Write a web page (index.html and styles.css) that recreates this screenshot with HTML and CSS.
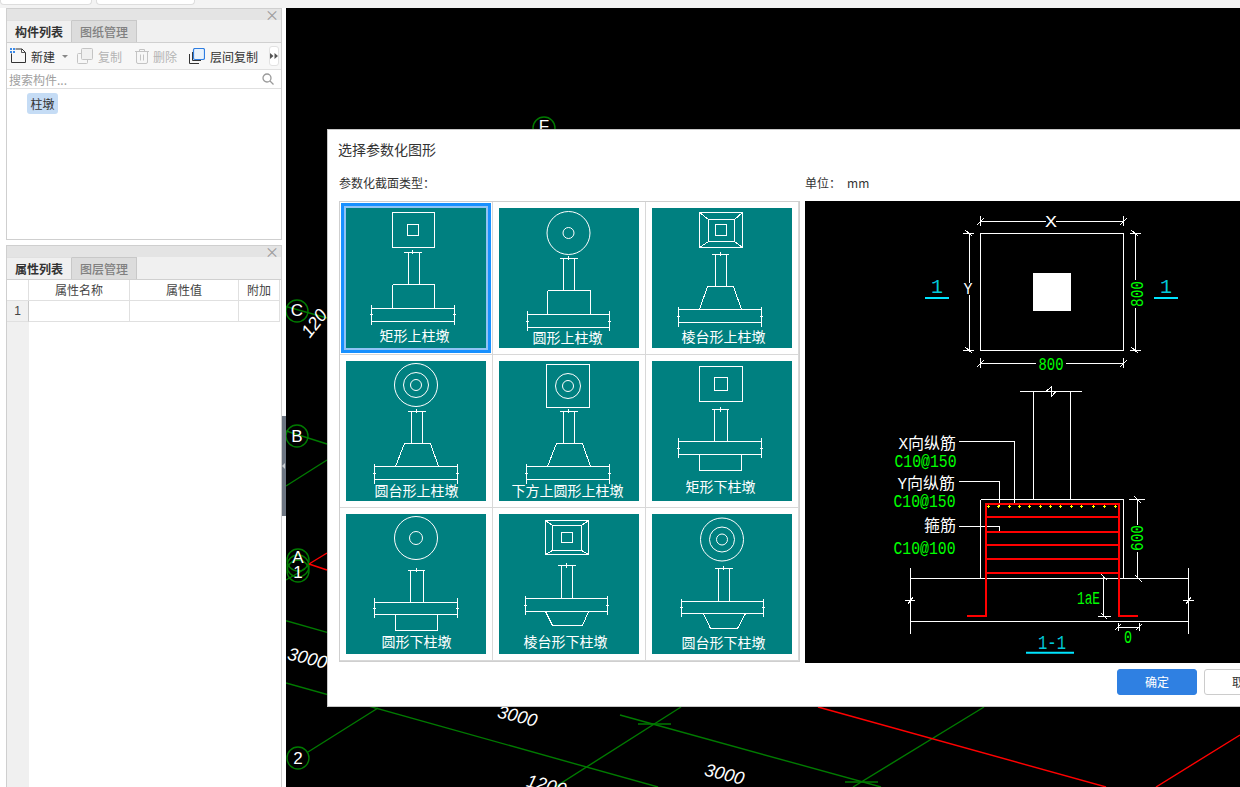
FILE: index.html
```html
<!DOCTYPE html>
<html lang="zh">
<head>
<meta charset="utf-8">
<title>选择参数化图形</title>
<link rel="stylesheet" href="styles.css">
</head>
<body>
<div class="topstrip"><span class="toptab t1"></span><span class="toptab t2"></span></div>
<div class="main">
  <aside class="sidebar">
    <section class="panel panel-top">
      <div class="panel-title"><span class="close">×</span></div>
      <div class="tabs"><span class="tab active">构件列表</span><span class="tab">图纸管理</span></div>
      <div class="toolbar">
        <span class="tool new">
          <svg class="ico" width="16" height="16" viewBox="0 0 16 16"><path class="i-dark" d="M1.5 5.5V14.5H15.5V4.5L12 1H5.500"/><path class="i-fold" d="M11.500 1V4.500H15.500"/><rect class="i-blue" x="0" y="0" width="2" height="2"/><rect class="i-blue" x="3" y="0" width="2" height="2"/><rect class="i-blue" x="0" y="3" width="2" height="2"/><rect class="i-blue" x="3" y="3" width="2" height="2"/></svg>
          <span>新建</span><i class="caret"></i>
        </span>
        <span class="tool off copy">
          <svg class="ico" width="16" height="16" viewBox="0 0 16 16"><path class="i-gray" d="M4.500 5.500H1.500a1 1 0 0 0-1 1V14.500a1 1 0 0 0 1 1H9.500a1 1 0 0 0 1-1V11.500"/><rect class="i-grayfill" x="4.500" y="0.500" width="11" height="11" rx="1"/></svg>
          <span>复制</span>
        </span>
        <span class="tool off del">
          <svg class="ico" width="14" height="16" viewBox="0 0 14 16"><path class="i-gray" d="M0 3.500H14M4.500 3.500V1.500H9.500V3.500M1.500 3.500V14a1.500 1.500 0 0 0 1.500 1.500H11A1.500 1.500 0 0 0 12.500 14V3.500M5.500 6.500V12.500M8.500 6.500V12.500"/></svg>
          <span>删除</span>
        </span>
        <span class="tool layer">
          <svg class="ico" width="16" height="16" viewBox="0 0 16 16"><path class="i-dark" d="M3.500 4V12.500H12M0.500 6V15.500H10"/><rect class="i-bluebox" x="4.500" y="0.500" width="11" height="11" rx="1.500"/></svg>
          <span>层间复制</span>
        </span>
        <span class="more"><svg width="8" height="6" viewBox="0 0 8 6"><path class="i-more" d="M0 0L3.500 3L0 6ZM4.500 0L8 3L4.500 6Z"/></svg></span>
      </div>
      <div class="search">
        <span>搜索构件...</span>
        <svg width="12" height="12" viewBox="0 0 12 12"><circle class="i-gray2" cx="5" cy="5" r="4"/><path class="i-gray2" d="M8 8L11.500 11.500"/></svg>
      </div>
      <div class="tree"><span class="pill">柱墩</span></div>
    </section>
    <section class="panel panel-bottom">
      <div class="panel-title"><span class="close">×</span></div>
      <div class="tabs"><span class="tab active">属性列表</span><span class="tab">图层管理</span></div>
      <div class="ptable">
        <div class="ph corner"></div><div class="ph">属性名称</div><div class="ph">属性值</div><div class="ph">附加</div>
        <div class="rowno">1</div><div class="pc"></div><div class="pc"></div><div class="pc"></div>
      </div>
      <div class="gutter"></div>
    </section>
    <div class="handle"><i></i></div>
  </aside>

  <div class="canvas">
    <svg class="cadbg" width="954" height="779" viewBox="286 8 954 779">
      <g class="gl">
        <path d="M286 306.500L327 318M286 431L327 444M286 486L327 460M286 580L305 569M286 620.700L327 632.300M286 683L658 787"/>
        <path d="M620 715L881 787M681 707L555 787M378 708L308 752M984 707L853 787"/>
        <path d="M638 724H671M845 782H878"/>
        <circle cx="544" cy="128" r="11"/><circle cx="297" cy="311" r="11"/><circle cx="297" cy="436" r="11"/>
        <circle cx="298" cy="560" r="11"/><circle cx="298" cy="566" r="11"/><circle cx="298" cy="571" r="11"/><circle cx="298" cy="758" r="11"/>
      </g>
      <g class="rl"><path d="M309 564L327 553M309 564L327 570M818 707L1106 787M1240 735L1156 787"/></g>
      <g class="cl">
        <text x="544" y="132">F</text><text x="297" y="316">C</text><text x="297" y="442">B</text>
        <text x="298" y="563">A</text><text x="298" y="578">1</text><text x="298" y="764">2</text>
        <text class="num" transform="translate(319 327) rotate(-52)">120</text>
        <text class="num" transform="translate(306 664) rotate(14)">3000</text>
        <text class="num" transform="translate(516 722) rotate(14)">3000</text>
        <text class="num" transform="translate(723 780) rotate(14)">3000</text>
        <text class="num" transform="translate(545 791) rotate(14)">1200</text>
      </g>
    </svg>

    <div class="dialog">
      <div class="dlg-title">选择参数化图形</div>
      <div class="dlg-labels"><span class="lbl-type">参数化截面类型：</span><span class="lbl-unit">单位：<b>mm</b></span></div>
      <div class="dlg-body">
        <div class="shapes">
          <div class="cell selected"><svg class="thumb" width="140" height="140" viewBox="0 0 140 140">
            <path d="M46.500 4.500H88.500V39.500H46.500ZM61.500 16.500H72.500V27.500H61.500ZM58 44.500H76M62.500 44.500V76.500M73.500 44.500V76.500M66.500 42V46M46.500 76.500H88.500M46.500 76.500V100.500M88.500 76.500V100.500M25.500 100.500H108.500M25.500 113.500H108.500M25.500 97V117M108.500 97V117M24 106H27M107 106H110"/>
            <text x="68.500" y="133">矩形上柱墩</text></svg></div>
          <div class="cell"><svg class="thumb" width="140" height="140" viewBox="0 0 140 140">
            <circle cx="69.500" cy="25" r="21.500"/><circle cx="69.500" cy="25" r="5.500"/>
            <path d="M60.500 50.500H79M64.500 50.500V82.500M75.500 50.500V82.500M69.500 48V52M48.500 82.500H91.500M48.500 82.500V106.500M91.500 82.500V106.500M28.500 106.500H110.500M28.500 119.500H110.500M28.500 103V123M110.500 103V123M27 113H30M109 113H112"/>
            <text x="68.500" y="135">圆形上柱墩</text></svg></div>
          <div class="cell"><svg class="thumb" width="140" height="140" viewBox="0 0 140 140">
            <path d="M47.500 4.500H90.500V39.500H47.500ZM56.500 11.500H82.500V33.500H56.500ZM63.500 16.500H74.500V27.500H63.500ZM47.500 4.500L56.500 11.500M90.500 4.500L82.500 11.500M47.500 39.500L56.500 33.500M90.500 39.500L82.500 33.500M59.500 46.500H77M63.500 46.500V78.500M74.500 46.500V78.500M68.500 44V48M55.500 78.500H81.500M55.500 78.500L47.500 101.500M81.500 78.500L89.500 101.500M26.500 101.500H109.500M26.500 114.500H109.500M26.500 99V119M109.500 99V119M25 108H28M108 108H111"/>
            <text x="71.500" y="134">棱台形上柱墩</text></svg></div>
          <div class="cell"><svg class="thumb" width="140" height="140" viewBox="0 0 140 140">
            <circle cx="70" cy="24" r="21.500"/><circle cx="70" cy="24" r="12.500"/><circle cx="70" cy="24" r="5.500"/>
            <path d="M61.500 50.500H80M65.500 50.500V82.500M76.500 50.500V82.500M70.500 48V52M58.500 82.500H84.500M58.500 82.500L49.500 105.500M84.500 82.500L92.500 105.500M28.500 105.500H111.500M28.500 118.500H111.500M28.500 103V123M111.500 103V123M27 112H30M110 112H113"/>
            <text x="70.500" y="135">圆台形上柱墩</text></svg></div>
          <div class="cell"><svg class="thumb" width="140" height="140" viewBox="0 0 140 140">
            <path d="M47.500 3.500H90.500V46.500H47.500Z"/><circle cx="69" cy="25" r="12.500"/><circle cx="69" cy="25" r="5.500"/>
            <path d="M60.500 50.500H79M64.500 50.500V82.500M75.500 50.500V82.500M69.500 48V52M57.500 82.500H83.500M57.500 82.500L48.500 105.500M83.500 82.500L91.500 105.500M27.500 105.500H110.500M27.500 118.500H110.500M27.500 103V123M110.500 103V123M26 112H29M109 112H112"/>
            <text x="68.500" y="135">下方上圆形上柱墩</text></svg></div>
          <div class="cell"><svg class="thumb" width="140" height="140" viewBox="0 0 140 140">
            <path d="M47.500 5.500H90.500V40.500H47.500ZM62.500 16.500H75.500V29.500H62.500ZM59.500 48.500H77M62.500 48.500V80.500M75.500 48.500V80.500M68.500 46V51M26.500 80.500H109.500M26.500 93.500H109.500M26.500 77V97M109.500 77V97M25 87H28M108 87H111M47.500 93.500V109.500H89.500V93.500"/>
            <text x="68.500" y="131">矩形下柱墩</text></svg></div>
          <div class="cell"><svg class="thumb" width="140" height="140" viewBox="0 0 140 140">
            <circle cx="70" cy="24" r="21.500"/><circle cx="70" cy="24" r="6.500"/>
            <path d="M61.500 56.500H79M64.500 56.500V88.500M77.500 56.500V88.500M70.500 54V58M28.500 88.500H111.500M28.500 100.500H111.500M28.500 84V104M111.500 84V104M27 94H30M110 94H113M49.500 100.500V116.500H91.500V100.500"/>
            <text x="70.500" y="133">圆形下柱墩</text></svg></div>
          <div class="cell"><svg class="thumb" width="140" height="140" viewBox="0 0 140 140">
            <path d="M46.500 6.500H89.500V40.500H46.500ZM53.500 11.500H82.500V36.500H53.500ZM62.500 18.500H73.500V28.500H62.500ZM46.500 6.500L53.500 11.500M89.500 6.500L82.500 11.500M46.500 40.500L53.500 36.500M89.500 40.500L82.500 36.500M58.500 51.500H77M62.500 51.500V84.500M73.500 51.500V84.500M67.500 49V54M26.500 84.500H108.500M26.500 97.500H108.500M26.500 82V101M108.500 82V101M25 91H28M107 91H110M46.500 97.500L53.500 111.500H83.500L89.500 97.500"/>
            <text x="66.500" y="133">棱台形下柱墩</text></svg></div>
          <div class="cell"><svg class="thumb" width="140" height="140" viewBox="0 0 140 140">
            <circle cx="70" cy="25.500" r="21.500"/><circle cx="70" cy="25.500" r="12.500"/><circle cx="70" cy="25.500" r="5.500"/>
            <path d="M62.500 54.500H81M66.500 54.500V87.500M77.500 54.500V87.500M71.500 52V56M29.500 87.500H111.500M29.500 99.500H111.500M29.500 85V103M111.500 85V103M28 93H31M110 93H113M51.500 99.500L58.500 114.500H85.500L93.500 99.500"/>
            <text x="71.500" y="134">圆台形下柱墩</text></svg></div>
        </div>
        <div class="preview">
          <svg width="435" height="462" viewBox="805 201 435 462">
            <g class="w">
              <path d="M980.500 233.500H1123.500V350.500H980.500ZM980.500 221.500H1046M1056 221.500H1123.500M980.500 216V226M1123.500 216V226M977 225L984 218M1120 225L1127 218"/>
              <path d="M969.500 233.500V283M969.500 295V350.500M963 233.500H974M963 350.500H974M965 230L972 236M965 347L972 353"/>
              <path d="M1135.500 233.500V280M1135.500 308V350.500M1130 233.500H1141M1130 350.500H1141M1131 230L1138 236M1131 347L1138 353"/>
              <path d="M980.500 363.500H1036M1066 363.500H1123.500M980.500 358V368M1123.500 358V368M977 367L984 360M1120 367L1127 360"/>
              <path d="M1020 391.500H1082M1033.500 391.500V499.500M1070.500 391.500V499.500M1046 391.500L1051 387V397L1056 391.500"/>
              <path d="M980.500 499.500H1123.500M980.500 499.500V578.500M1123.500 499.500V578.500M910.500 578.500H1188.500M910.500 621.500H1188.500M910.500 568V634M1188.500 568V634M905 600H915M1183 600H1194M908 604L913 597M1186 604L1191 597"/>
              <path d="M959 441.500H1014.500V504M959 481.500H999.500V506M959 526.500H999.500V532"/>
              <path d="M1137.500 499.500V525M1137.500 552V578.500M1129 499.500H1145M1128 578.500H1141M1134 496L1141 503M1135 575L1142 582"/>
              <path d="M1103.500 577V616M1098 616.500H1111M1101 574L1107 580M1101 613L1107 619"/>
              <path d="M1118 627.500H1139M1118 623V631M1139 623V631M1115 630L1121 624M1136 630L1142 624"/>
            </g>
            <rect class="sq" x="1033" y="273" width="38" height="38"/>
            <path class="rb" d="M967 616H986V504H1119V616H1138"/>
            <path class="rs" d="M986 517H1119M986 532H1119M986 545H1119M986 559H1119M986 573H1119"/>
            <path class="yd" d="M986.800 506.700H989.800M988.300 505.200V508.200M996.800 506.700H999.800M998.300 505.200V508.200M1007.800 506.700H1010.800M1009.300 505.200V508.200M1017.800 506.700H1020.800M1019.300 505.200V508.200M1027.800 506.700H1030.800M1029.300 505.200V508.200M1038.800 506.700H1041.800M1040.300 505.200V508.200M1048.800 506.700H1051.800M1050.300 505.200V508.200M1058.800 506.700H1061.800M1060.300 505.200V508.200M1069.800 506.700H1072.800M1071.300 505.200V508.200M1079.800 506.700H1082.800M1081.300 505.200V508.200M1091.800 506.700H1094.800M1093.300 505.200V508.200M1102.800 506.700H1105.800M1104.300 505.200V508.200M1113.800 506.700H1116.800M1115.300 505.200V508.200"/>
            <path class="cu" d="M925 298H949M1154 298H1178M1026 652.700H1074"/>
            <text class="wt" x="1051" y="226.500" textLength="12" lengthAdjust="spacingAndGlyphs">X</text>
            <text class="wt" x="968" y="294" textLength="9" lengthAdjust="spacingAndGlyphs">Y</text>
            <text class="gt" x="1051" y="370" textLength="25" lengthAdjust="spacingAndGlyphs">800</text>
            <text class="gt" transform="translate(1142.500 294) rotate(-90)" textLength="26" lengthAdjust="spacingAndGlyphs">800</text>
            <text class="gt" transform="translate(1142.500 538) rotate(-90)" textLength="26" lengthAdjust="spacingAndGlyphs">600</text>
            <text class="ct" x="937" y="293">1</text>
            <text class="ct" x="1166" y="293">1</text>
            <text class="ct" x="1052" y="648.500" textLength="28" lengthAdjust="spacingAndGlyphs">1-1</text>
            <text class="lb" x="956" y="449">X向纵筋</text>
            <text class="gl2" x="956.500" y="467" textLength="62" lengthAdjust="spacingAndGlyphs">C10@150</text>
            <text class="lb" x="955" y="489">Y向纵筋</text>
            <text class="gl2" x="955.500" y="507" textLength="62" lengthAdjust="spacingAndGlyphs">C10@150</text>
            <text class="lb" x="956" y="531">箍筋</text>
            <text class="gl2" x="955.500" y="554" textLength="62" lengthAdjust="spacingAndGlyphs">C10@100</text>
            <text class="gt" x="1088.500" y="604" textLength="23" lengthAdjust="spacingAndGlyphs">1aE</text>
            <text class="gt" x="1128" y="642.500" textLength="8" lengthAdjust="spacingAndGlyphs">0</text>
          </svg>
        </div>
      </div>
      <div class="dlg-foot"><span class="btn primary">确定</span><span class="btn">取消</span></div>
    </div>
  </div>
</div>
</body>
</html>
```
FILE: styles.css
```css
* { box-sizing: border-box; }
html, body { margin: 0; height: 787px; overflow: hidden; }
body { background: #fff; font-family: "Noto Sans CJK SC", "Noto Sans", sans-serif; font-size: 12px; color: #333; }

.topstrip { height: 8px; display: flex; gap: 4px; background: #f3f3f3; align-items: flex-start; }
.toptab { height: 5px; background: #fff; border: 1px solid #ddd; border-top: 0; border-radius: 0 0 4px 4px; }
.t1 { width: 92px; }
.t2 { width: 99px; }

.main { display: flex; height: 779px; }
.sidebar { position: relative; width: 286px; flex: none; padding: 0 4px 0 6px; display: flex; flex-direction: column; gap: 5px; background: #fff; }
.panel { border: 1px solid #cfcfcf; border-bottom: 0; background: #fff; display: flex; flex-direction: column; }
.panel-top { height: 232px; border-bottom: 1px solid #cfcfcf; }
.panel-bottom { flex: 1; min-height: 0; }
.panel-title { height: 11px; background: #e4e4e4; display: flex; justify-content: flex-end; align-items: center; padding-right: 2px; }
.close { font-size: 14px; line-height: 11px; color: #999; }
.tabs { height: 23px; display: flex; background: #f0f0f0; border-bottom: 1px solid #d0d0d0; }
.tab { width: 65px; font-weight: 500; text-align: center; line-height: 22px; color: #808080; background: #dcdcdc; border: 1px solid #c8c8c8; border-bottom: 0; border-left: 0; }
.tab.active { color: #333; background: #f0f0f0; font-weight: 700; border-top: 1px solid #e0e0e0; }

.toolbar { height: 27px; flex: none; display: flex; align-items: center; background: #f7f7f7; border-bottom: 1px solid #e0e0e0; position: relative; padding-left: 3px; }
.tool { display: flex; align-items: center; gap: 5px; white-space: nowrap; color: #333; }
.tool.off { color: #b4b4b4; }
.tool.new { width: 67px; }
.tool.copy { width: 58px; }
.tool.del { width: 54px; gap: 4px; }
.tool.layer { width: 79px; }
.ico { display: block; flex: none; }
.caret { width: 0; height: 0; margin-left: 2px; border: 3px solid transparent; border-top: 3px solid #888; border-bottom: 0; }
.more { width: 10px; height: 20px; margin-left: 1px; background: #fff; border: 1px solid #e2e2e2; border-radius: 3px; display: flex; align-items: center; justify-content: center; }
.more svg { flex: none; }
.i-dark { fill: none; stroke: #333; }
.i-fold { fill: none; stroke: #555; }
.i-blue { fill: #3d8be8; }
.i-gray { fill: none; stroke: #c4c4c4; }
.i-gray2 { fill: none; stroke: #9a9a9a; stroke-width: 1.3; }
.i-grayfill { fill: #f0f0f0; stroke: #c4c4c4; }
.i-bluebox { fill: #e8f2fc; stroke: #2e7de1; stroke-width: 1.2; }
.i-more { fill: #555; }

.search { height: 19px; flex: none; display: flex; justify-content: space-between; align-items: center; padding: 0 7px 0 2px; color: #a0a0a0; border-bottom: 1px solid #e0e0e0; }
.tree { padding: 4px 0 0 20px; }
.pill { display: inline-block; width: 31px; height: 21px; line-height: 21px; text-align: center; border-radius: 3px; background: #c5dcf5; color: #333; }

.ptable { display: grid; grid-template-columns: 22px 101px 109px 41px; grid-template-rows: 21px 21px; flex: none; background: #fff; }
.ph { border-right: 1px solid #e0e0e0; border-bottom: 1px solid #e0e0e0; text-align: center; line-height: 20px; color: #444; }
.corner { background: #fff; }
.rowno { background: #f0f0f0; border-right: 1px solid #c8c8c8; border-bottom: 1px solid #e0e0e0; text-align: center; line-height: 20px; font-family: "Liberation Sans", sans-serif; color: #444; }
.pc { border-right: 1px solid #e0e0e0; border-bottom: 1px solid #e0e0e0; }
.gutter { width: 22px; flex: 1; background: #f0f0f0; }

.handle { position: absolute; left: 282px; top: 408px; width: 4px; height: 100px; background: #6d7682; display: flex; align-items: center; }
.handle i { width: 0; height: 0; border: 3px solid transparent; border-right: 3px solid #c8ccd0; border-left: 0; }

.canvas { position: relative; flex: 1; min-width: 0; background: #000; overflow: hidden; }
.cadbg { display: block; }
.gl path, .gl circle { fill: none; stroke: #007a00; stroke-width: 1.4; }
.rl path { fill: none; stroke: #f00; stroke-width: 1.4; }
.cl text { fill: #fff; font-family: "Liberation Sans", sans-serif; font-size: 17px; text-anchor: middle; }
.cl .num { font-size: 18px; font-style: italic; }

.dialog { position: absolute; left: 41px; top: 121px; width: 1000px; height: 578px; background: #fff; border: 1px solid #c8c8c8; padding: 9px 0 0 11px; }
.dlg-title { height: 20px; line-height: 20px; font-size: 14px; color: #333; margin-left: -1px; }
.dlg-labels { display: flex; height: 18px; margin-top: 15px; line-height: 18px; color: #333; }
.lbl-type { width: 466px; }
.lbl-unit b { font-weight: 400; margin-left: 6px; }
.dlg-body { display: flex; gap: 5px; margin-top: 9px; height: 462px; }
.shapes { width: 461px; height: 461px; flex: none; display: grid; grid-template-columns: repeat(3, 153px); grid-template-rows: repeat(3, 153px); border: 1px solid #cfcfcf; background: #fff; }
.cell { padding: 6px; border-right: 1px solid #d8d8d8; border-bottom: 1px solid #d8d8d8; }
.cell.selected .thumb { box-shadow: 0 0 0 2px #8fc3f5, 0 0 0 5px #1890ff; }
.thumb { display: block; background: #008080; }
.thumb path, .thumb circle { fill: none; stroke: #fff; stroke-width: 1; }
.thumb path { shape-rendering: crispEdges; }
.thumb text { fill: #fff; font-size: 14px; text-anchor: middle; font-family: "Noto Sans CJK SC", sans-serif; font-weight: 400; }
.preview { flex: 1; min-width: 0; background: #000; }
.preview svg { display: block; }
.w path { fill: none; stroke: #fff; stroke-width: 1; shape-rendering: crispEdges; }
.sq { fill: #fff; }
.rb { fill: none; stroke: #f00; stroke-width: 2; shape-rendering: crispEdges; }
.rs { fill: none; stroke: #f00; stroke-width: 2; shape-rendering: crispEdges; }
.yd { fill: none; stroke: #ff0; stroke-width: 1; shape-rendering: crispEdges; }
.cu { fill: none; stroke: #00e5ff; stroke-width: 2; }
.preview text { font-family: "Liberation Mono", "Noto Sans CJK SC", monospace; }
.wt { fill: #fff; font-size: 17px; text-anchor: middle; }
.gt { fill: #00ff00; font-size: 18px; text-anchor: middle; }
.ct { fill: #00c8d8; font-size: 20px; text-anchor: middle; }
.lb { fill: #fff; font-size: 16px; text-anchor: end; }
.gl2 { fill: #00ff00; font-size: 18px; text-anchor: end; }

.dlg-foot { display: flex; justify-content: flex-end; gap: 7px; margin-top: 6px; padding-right: 42px; }
.btn { width: 80px; height: 26px; line-height: 24px; text-align: center; border: 1px solid #ccc; border-radius: 3px; background: #fff; color: #333; }
.btn.primary { background: #2f80e2; border-color: #2f80e2; color: #fff; }
```
